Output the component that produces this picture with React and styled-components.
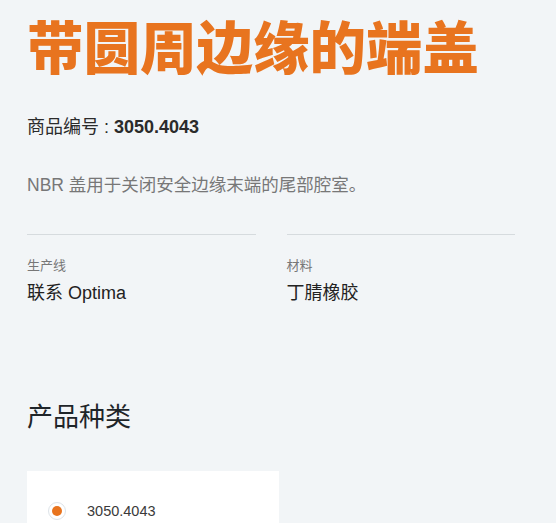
import React from "react";
import styled, { createGlobalStyle } from "styled-components";

const GlobalStyle = createGlobalStyle`
  body {
    margin: 0;
    background: #f2f5f7;
    font-family: "Liberation Sans", "Noto Sans CJK SC", sans-serif;
    color: #333;
  }
`;

const Page = styled.div`
  padding: 11px 41px 0 27px;
`;

const Title = styled.h1`
  margin: 0;
  font-family: "Noto Sans CJK SC", sans-serif;
  font-weight: 900;
  font-size: 56.5px;
  line-height: 1.2;
  color: #e8741f;
`;

const Code = styled.div`
  margin-top: 35px;
  font-size: 18px;
  line-height: 27px;
  color: #2b2b2b;
  b {
    font-weight: 700;
  }
`;

const Description = styled.p`
  margin: 31px 0 0;
  font-size: 17.5px;
  line-height: 27px;
  color: #777;
`;

const Specs = styled.div`
  display: grid;
  grid-template-columns: 1fr 1fr;
  column-gap: 31px;
  margin-top: 35px;
`;

const Spec = styled.div`
  border-top: 1px solid #d6dbde;
  padding-top: 21px;
`;

const Label = styled.div`
  font-size: 13px;
  line-height: 20px;
  color: #777;
`;

const Value = styled.div`
  margin-top: 4px;
  font-size: 18px;
  line-height: 27px;
  color: #222;
`;

const Heading = styled.h2`
  margin: 92px 0 0;
  font-size: 26px;
  font-weight: 400;
  line-height: 36px;
  color: #1f2529;
`;

const Card = styled.div`
  margin-top: 36px;
  width: 252px;
  background: #fff;
  padding: 31px 21px 30px;
  box-sizing: border-box;
`;

const Option = styled.label`
  display: flex;
  align-items: center;
  gap: 21px;
  font-size: 14.5px;
  color: #3a3a3a;
`;

const Radio = styled.span`
  width: 18px;
  height: 18px;
  border-radius: 50%;
  box-sizing: border-box;
  border: 1px solid #dde3e8;
  display: flex;
  align-items: center;
  justify-content: center;
  &::after {
    content: "";
    width: 10px;
    height: 10px;
    border-radius: 50%;
    background: ${p => (p.checked ? "#e8741f" : "transparent")};
  }
`;

const App = () => {
  return (
    <Page>
      <GlobalStyle />
      <Title>带圆周边缘的端盖</Title>
      <Code>
        商品编号 : <b>3050.4043</b>
      </Code>
      <Description>NBR 盖用于关闭安全边缘末端的尾部腔室。</Description>
      <Specs>
        <Spec>
          <Label>生产线</Label>
          <Value>联系 Optima</Value>
        </Spec>
        <Spec>
          <Label>材料</Label>
          <Value>丁腈橡胶</Value>
        </Spec>
      </Specs>
      <Heading>产品种类</Heading>
      <Card>
        <Option>
          <Radio checked />
          3050.4043
        </Option>
      </Card>
    </Page>
  );
};

export default App;
